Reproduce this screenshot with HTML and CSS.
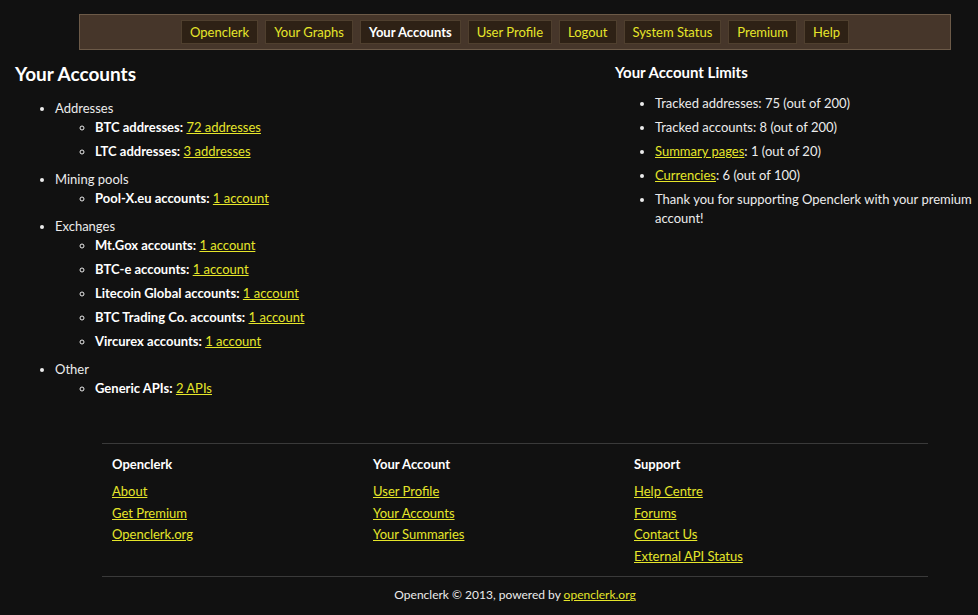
FILE: index.html
```html
<!DOCTYPE html>
<html>
<head>
<meta charset="utf-8">
<title>Your Accounts - Openclerk</title>
<link rel="stylesheet" href="styles.css">
</head>
<body>
<div class="navbar">
  <a class="navbtn" href="#">Openclerk</a>
  <a class="navbtn" href="#">Your Graphs</a>
  <a class="navbtn active" href="#">Your Accounts</a>
  <a class="navbtn" href="#">User Profile</a>
  <a class="navbtn" href="#">Logout</a>
  <a class="navbtn" href="#">System Status</a>
  <a class="navbtn" href="#">Premium</a>
  <a class="navbtn" href="#">Help</a>
</div>

<div class="content">
  <div class="main">
    <h1 class="title">Your Accounts</h1>
    <ul class="outer">
      <li>Addresses
        <ul class="inner">
          <li><b>BTC addresses:</b> <a href="#">72 addresses</a></li>
          <li><b>LTC addresses:</b> <a href="#">3 addresses</a></li>
        </ul>
      </li>
      <li>Mining pools
        <ul class="inner">
          <li><b>Pool-X.eu accounts:</b> <a href="#">1 account</a></li>
        </ul>
      </li>
      <li>Exchanges
        <ul class="inner">
          <li><b>Mt.Gox accounts:</b> <a href="#">1 account</a></li>
          <li><b>BTC-e accounts:</b> <a href="#">1 account</a></li>
          <li><b>Litecoin Global accounts:</b> <a href="#">1 account</a></li>
          <li><b>BTC Trading Co. accounts:</b> <a href="#">1 account</a></li>
          <li><b>Vircurex accounts:</b> <a href="#">1 account</a></li>
        </ul>
      </li>
      <li>Other
        <ul class="inner">
          <li><b>Generic APIs:</b> <a href="#">2 APIs</a></li>
        </ul>
      </li>
    </ul>
  </div>
  <div class="side">
    <h2 class="subtitle">Your Account Limits</h2>
    <ul class="limits">
      <li>Tracked addresses: 75 (out of 200)</li>
      <li>Tracked accounts: 8 (out of 200)</li>
      <li><a href="#">Summary pages</a>: 1 (out of 20)</li>
      <li><a href="#">Currencies</a>: 6 (out of 100)</li>
      <li>Thank you for supporting Openclerk with your premium account!</li>
    </ul>
  </div>
</div>

<div class="footer">
  <div class="footcols">
    <div class="footcol">
      <h3>Openclerk</h3>
      <ul>
        <li><a href="#">About</a></li>
        <li><a href="#">Get Premium</a></li>
        <li><a href="#">Openclerk.org</a></li>
      </ul>
    </div>
    <div class="footcol">
      <h3>Your Account</h3>
      <ul>
        <li><a href="#">User Profile</a></li>
        <li><a href="#">Your Accounts</a></li>
        <li><a href="#">Your Summaries</a></li>
      </ul>
    </div>
    <div class="footcol">
      <h3>Support</h3>
      <ul>
        <li><a href="#">Help Centre</a></li>
        <li><a href="#">Forums</a></li>
        <li><a href="#">Contact Us</a></li>
        <li><a href="#">External API Status</a></li>
      </ul>
    </div>
  </div>
  <div class="copyright">Openclerk © 2013, powered by <a href="#">openclerk.org</a></div>
</div>
</body>
</html>
```

FILE: styles.css
```css
html, body {
  margin: 0;
  padding: 0;
  background: #111111;
}
body {
  color: #ececec;
  font-family: Lato, "Liberation Sans", sans-serif;
  font-size: 13px;
  line-height: 18px;
}
a {
  color: #e6e62a;
  text-decoration: underline;
}

.navbar {
  margin: 14px 27px 0 79px;
  height: 34px;
  background: #46362a;
  border: 1px solid #6c5a48;
  display: flex;
  justify-content: center;
  align-items: center;
  gap: 7px;
}
.navbtn {
  display: block;
  height: 22px;
  line-height: 22px;
  padding: 0 8px;
  background: #2e2115;
  border: 1px solid #4f3f2e;
  color: #e6e62a;
  text-decoration: none;
}
.navbtn.active {
  color: #ffffff;
  font-weight: bold;
}

.content {
  display: grid;
  grid-template-columns: 615px 1fr;
}
.main {
  padding-left: 15px;
}
.title {
  margin: 13px 0 0;
  font-size: 19px;
  line-height: 22px;
  font-weight: bold;
  color: #ffffff;
}
.outer {
  margin: 14px 0 0;
  padding-left: 40px;
  list-style: disc;
}
.outer > li {
  padding-bottom: 4px;
}
.inner {
  margin: 1px 0 0;
  padding-left: 40px;
  list-style: circle;
}
.inner > li {
  margin-bottom: 6px;
}
.inner b {
  color: #ffffff;
}

.subtitle {
  margin: 12px 0 0;
  font-size: 15px;
  line-height: 20px;
  font-weight: bold;
  color: #ffffff;
}
.limits {
  margin: 12px 0 0;
  padding-left: 40px;
  padding-right: 0;
  line-height: 19px;
}
.limits li {
  margin-bottom: 5px;
}

.footer {
  margin: 36px 50px 0 102px;
}
.footcols {
  display: grid;
  grid-template-columns: 261px 261px 1fr;
  border-top: 1px solid #3a3a3a;
  border-bottom: 1px solid #3a3a3a;
  padding: 10px 10px 9px;
}
.footcol h3 {
  margin: 0;
  font-size: 13px;
  line-height: 20px;
  font-weight: bold;
  color: #ffffff;
}
.footcol ul {
  list-style: none;
  margin: 7px 0 0;
  padding: 0;
  line-height: 21.6px;
}
.copyright {
  text-align: center;
  font-size: 12px;
  padding-top: 9px;
  color: #ececec;
}
```
